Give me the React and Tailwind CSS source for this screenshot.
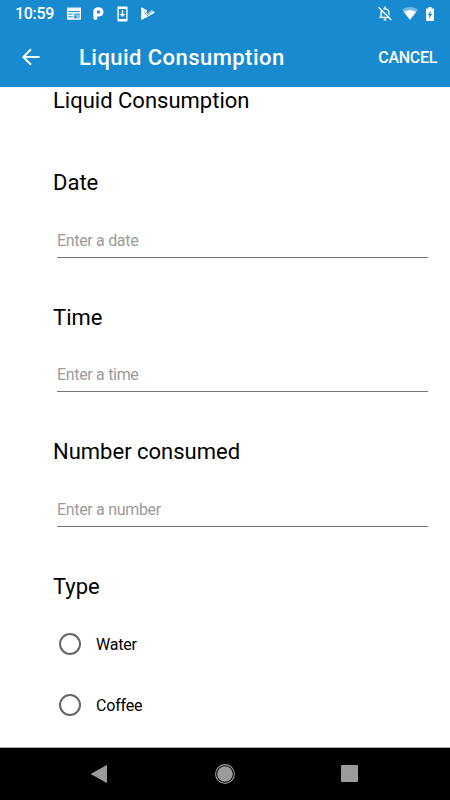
import { useState } from "react";

const fields = [
  { label: "Date", placeholder: "Enter a date" },
  { label: "Time", placeholder: "Enter a time" },
  { label: "Number consumed", placeholder: "Enter a number" },
];

const types = ["Water", "Coffee"];

function StatusBar() {
  return (
    <div className="flex h-[27px] items-center pl-[15px] pr-[16px]">
      <span className="w-[52px] pt-px text-[16px] font-medium leading-[26px] tracking-[-0.3px]">10:59</span>
      <svg className="h-[13px] w-[14px]" viewBox="0 0 14 13" fill="currentColor">
        <path opacity="0.75" d="M0 0.4h14v2H0z" />
        <path d="M0 1.6h14v10.6a.5.5 0 0 1-.5.5H.5a.5.5 0 0 1-.5-.5z" />
        <path d="M1.2 4.6h11.6M1.2 7.2h4.6M1.2 9.8h4.6" stroke="#188ad0" strokeWidth="1" />
        <path d="M7.2 6.6h5.6v4.8H7.2z" fill="#188ad0" />
        <path d="M7.2 7.4h5.6v4h-3.4V8.8H7.2z" opacity="0.5" />
      </svg>
      <svg className="ml-[12px] h-[13px] w-[11px]" viewBox="0 0 11 13" fill="currentColor">
        <path fillRule="evenodd" d="M0.3 4.8C0.3 1.8 2.2 0.2 5.3 0.2c3.2 0 5.2 1.8 5.2 4.7 0 2.8-2 4.7-5 4.7H4.3v1.6c0 1-.8 1.7-1.9 1.7-1.2 0-2-.7-2-1.8zM4 3.6v2.9h1.6c1 0 1.5-.6 1.5-1.5s-.6-1.4-1.5-1.4z" />
      </svg>
      <svg className="ml-[13px] h-4 w-[11px]" viewBox="0 0 11 16" fill="currentColor">
        <path fillRule="evenodd" d="M1.5 0.4h8a1.1 1.1 0 0 1 1.1 1.1v13a1.1 1.1 0 0 1-1.1 1.1h-8a1.1 1.1 0 0 1-1.1-1.1v-13A1.1 1.1 0 0 1 1.5 0.4zM1.8 3v10h7.4V3z" />
        <path d="M4.8 4.2h1.4v3.8h2.2L5.5 11 2.6 8h2.2z" />
      </svg>
      <svg className="ml-[12.5px] h-[13px] w-[14px]" viewBox="0 0 14 13" fill="currentColor">
        <path d="M0.2 0.7Q.3 0 1 .4L6.2 3.4 5.2 5.8 6.5 7 10.9 3.1 13.6 5.2q.5.5-.2.9L1.1 12.7q-.9.3-.9-.6z" />
        <path d="M3 5.2 6.2 8.6 12.4 3.3" fill="none" stroke="#188ad0" strokeWidth="0.8" />
      </svg>
      <svg className="ml-auto h-[15px] w-[14px]" viewBox="0 0 14 15" fill="none" stroke="currentColor" strokeWidth="1.4">
        <path d="M3.1 11.4V6.7C3.1 4.3 4.7 2.9 7 2.9s3.9 1.4 3.9 3.8v4.7M1.3 11.4h11.4M7 .6v2.2" />
        <path d="M5.7 13.5h2.6" strokeWidth="1.9" />
        <path d="M1.6 0.6 14 13" stroke="#188ad0" strokeWidth="1.4" />
        <path d="M0.5 1.2 13.3 14" strokeWidth="1.4" />
      </svg>
      <svg className="ml-[10px] h-[13px] w-4" viewBox="0 0 16 13" fill="currentColor">
        <path opacity="0.4" d="M0 2.8C4.8-.8 11.2-.8 16 2.8L8 12.8z" />
        <path d="M1.9 5.1c3.7-2.5 8.5-2.5 12.2 0L8 12.8z" />
      </svg>
      <svg className="ml-2 h-[14px] w-2" viewBox="0 0 8 14" fill="currentColor">
        <path d="M2.5 0h3v1.4H7.3A.7.7 0 0 1 8 2.1v11.2a.7.7 0 0 1-.7.7H.7a.7.7 0 0 1-.7-.7V2.1a.7.7 0 0 1 .7-.7h1.8z" />
        <path d="M5 3.4 4.5 7h1.7L3 12l.5-3.7H1.8z" fill="#188ad0" />
      </svg>
    </div>
  );
}

function AppBar() {
  return (
    <div className="flex h-[60px] items-center pl-[22px] pr-[13px]">
      <button type="button" aria-label="Back">
        <svg className="h-[18px] w-[18px]" viewBox="0 0 18 18" fill="none" stroke="currentColor" strokeWidth="2">
          <path d="M17.5 9H1.6M9 1.2 1.3 9 9 16.8" />
        </svg>
      </button>
      <h1 className="ml-[39px] whitespace-nowrap pt-[2px] text-[22px] font-medium leading-[30px] tracking-[0.45px]">Liquid Consumption</h1>
      <button type="button" className="ml-auto pt-[2px] text-[16px] font-medium leading-6 tracking-[-0.3px]">CANCEL</button>
    </div>
  );
}

function Field({ label, placeholder }) {
  return (
    <div className="h-[134.5px]">
      <label className="block text-[22px] leading-[30px]">{label}</label>
      <input
        type="text"
        placeholder={placeholder}
        className="ml-1 mt-[25px] block h-[34.5px] w-[371px] border-b border-[#777777] pt-px text-[16px] tracking-[-0.32px] outline-none placeholder:text-[#9b9b9b]"
      />
    </div>
  );
}

export default function App() {
  const [type, setType] = useState("");

  return (
    <div className="flex h-[800px] w-[450px] flex-col overflow-hidden bg-white font-['Roboto',sans-serif] text-black">
      <header className="h-[87px] shrink-0 bg-[#188ad0] text-white">
        <StatusBar />
        <AppBar />
      </header>

      <main className="min-h-0 flex-1 overflow-hidden pl-[53px]">
        <h2 className="mb-[54px] text-[22px] leading-[27px]">Liquid Consumption</h2>
        {fields.map((field) => (
          <Field key={field.label} {...field} />
        ))}
        <div className="text-[22px] leading-[30px]">Type</div>
        <div className="pt-[12px]">
          {types.map((item) => (
            <label key={item} className="flex h-[61px] items-center pl-[6px] text-[16px] tracking-[-0.2px]">
              <input
                type="radio"
                name="type"
                checked={type === item}
                onChange={() => setType(item)}
                className="mr-[15px] h-[22px] w-[22px] appearance-none rounded-full border-2 border-[#666666] checked:border-[6px]"
              />
              <span className="pt-px">{item}</span>
            </label>
          ))}
        </div>
      </main>

      <nav className="flex h-[53px] shrink-0 items-center border-t border-[#aaaaaa] bg-black pb-px pl-[91px] text-[#9b9b9b]">
        <svg className="h-[18px] w-4" viewBox="0 0 16 18" fill="currentColor">
          <path d="M15.3 0.3q.7-.3.7.5v16.4q0 .8-.7.5L.5 9.4q-.6-.4 0-.8z" />
        </svg>
        <svg className="ml-[108px] h-5 w-5" viewBox="0 0 20 20">
          <circle cx="10" cy="10" r="9.4" fill="none" stroke="currentColor" strokeWidth="1.1" />
          <circle cx="10" cy="10" r="7.8" fill="currentColor" />
        </svg>
        <div className="ml-[106px] h-[17px] w-[17px] rounded-[1px] bg-[#9b9b9b]" />
      </nav>
    </div>
  );
}
